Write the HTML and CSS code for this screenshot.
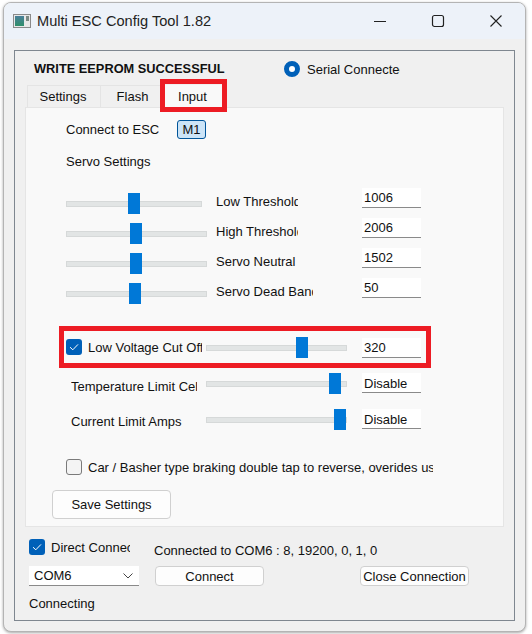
FILE: index.html
```html
<!DOCTYPE html>
<html lang="en">
<head>
  <meta charset="UTF-8" />
  <title>Multi ESC Config Tool 1.82</title>
  <link rel="stylesheet" href="styles.css">
</head>
<body>
  <div class="window">
    <header class="titlebar">
      <svg class="app-icon" width="18" height="14" viewBox="0 0 18 14">
        <defs>
          <linearGradient id="appfill" x1="0" y1="0" x2="0" y2="1">
            <stop offset="0" stop-color="#4a7f9a"/>
            <stop offset="1" stop-color="#2f8f6a"/>
          </linearGradient>
        </defs>
        <rect x="0.5" y="0.5" width="17" height="13" fill="#e8e8e8" stroke="#8a8a8a"/>
        <rect x="2" y="2" width="9" height="10" fill="url(#appfill)"/>
        <rect x="13" y="2" width="3" height="5" fill="#7c8a84"/>
      </svg>
      <span class="title">Multi ESC Config Tool 1.82</span>
      <div class="controls">
        <svg width="14" height="14" viewBox="0 0 14 14"><path d="M1 7.5h12" stroke="#222" fill="none"/></svg>
        <svg width="14" height="14" viewBox="0 0 14 14"><rect x="1.5" y="1.5" width="11" height="11" rx="2" stroke="#222" stroke-width="1.2" fill="none"/></svg>
        <svg width="14" height="14" viewBox="0 0 14 14"><path d="M1.5 1.5l11 11M12.5 1.5l-11 11" stroke="#222" stroke-width="1.1" fill="none"/></svg>
      </div>
    </header>

    <div class="content">
      <div class="group">
        <div class="status-row">
          <strong class="status">WRITE EEPROM SUCCESSFUL</strong>
          <span class="radio"></span>
          <span class="clip radio-label">Serial Connected</span>
        </div>

        <nav class="tabs">
          <a class="tab tab-settings">Settings</a>
          <a class="tab tab-flash">Flash</a>
          <a class="tab tab-input">Input<span class="marker"></span></a>
        </nav>

        <section class="pane">
          <div class="esc-row">
            <span class="esc-label">Connect to ESC</span>
            <button class="esc-btn">M1</button>
          </div>
          <div class="servo-title">Servo Settings</div>

          <div class="servo-row">
            <div class="slider short"><span class="thumb" style="left: 62px"></span></div>
            <span class="clip w81">Low Threshold</span>
            <input class="num" type="text" value="1006">
          </div>
          <div class="servo-row">
            <div class="slider"><span class="thumb" style="left: 64px"></span></div>
            <span class="clip w81">High Threshold</span>
            <input class="num" type="text" value="2006">
          </div>
          <div class="servo-row">
            <div class="slider"><span class="thumb" style="left: 64px"></span></div>
            <span class="clip w96">Servo Neutral</span>
            <input class="num" type="text" value="1502">
          </div>
          <div class="servo-row">
            <div class="slider"><span class="thumb" style="left: 63px"></span></div>
            <span class="clip w96">Servo Dead Band</span>
            <input class="num" type="text" value="50">
          </div>

          <div class="voltage-box">
            <span class="check on">
              <svg width="16" height="16" viewBox="0 0 16 16"><path d="M4 8.2l2.8 2.6L12 5.4" stroke="#fff" fill="none"/></svg>
            </span>
            <span class="clip voltage-label">Low Voltage Cut Off</span>
            <div class="slider"><span class="thumb" style="left: 90px"></span></div>
            <input class="num" type="text" value="320">
          </div>

          <div class="limit-row temp">
            <span class="clip limit-label">Temperature Limit Celsius</span>
            <div class="slider"><span class="thumb" style="left: 123px"></span></div>
            <input class="num" type="text" value="Disable">
          </div>
          <div class="limit-row amps">
            <span class="clip limit-label">Current Limit Amps</span>
            <div class="slider"><span class="thumb" style="left: 128px"></span></div>
            <input class="num" type="text" value="Disable">
          </div>

          <div class="brake-row">
            <span class="check"></span>
            <span class="clip brake-label">Car / Basher type braking double tap to reverse, overides user settings</span>
          </div>

          <button class="btn save-btn">Save Settings</button>
        </section>

        <div class="bottom">
          <div class="bottom-top">
            <span class="check on">
              <svg width="16" height="16" viewBox="0 0 16 16"><path d="M4 8.2l2.8 2.6L12 5.4" stroke="#fff" fill="none"/></svg>
            </span>
            <span class="clip direct-label">Direct Connect</span>
            <span class="conn-info">Connected to COM6 : 8, 19200, 0, 1, 0</span>
          </div>
          <div class="bottom-mid">
            <div class="combo">
              <span>COM6</span>
              <svg width="12" height="8" viewBox="0 0 12 8"><path d="M1.5 1.5L6 6l4.5-4.5" stroke="#444" fill="none"/></svg>
            </div>
            <button class="btn connect-btn">Connect</button>
            <button class="btn close-btn">Close Connection</button>
          </div>
          <div class="connecting">Connecting</div>
        </div>
      </div>
    </div>
  </div>
</body>
</html>
```

FILE: styles.css
```css
* {
  margin: 0;
  padding: 0;
  box-sizing: border-box;
  font-family: "Liberation Sans", Arial, sans-serif;
}

body {
  background: #fff;
  color: #111;
  font-size: 13px;
  width: 532px;
  height: 634px;
  padding: 2px 6px 2px 3px;
  overflow: hidden;
}

.window {
  height: 630px;
  background: #f0f0f0;
  border: 1px solid #b4b4b4;
  border-radius: 8px;
  box-shadow: 0 1px 3px rgba(0, 0, 0, 0.35);
  overflow: hidden;
}

/* Title bar */
.titlebar {
  height: 36px;
  background: #edf2f9;
  display: flex;
  align-items: center;
  padding-left: 9px;
}

.app-icon {
  margin-right: 6px;
}

.title {
  font-size: 14.6px;
  color: #222;
}

.controls {
  margin-left: auto;
  display: flex;
  gap: 44px;
  padding-right: 22px;
}

.content {
  padding: 11px 10px 10px 10px;
}

.group {
  height: 571px;
  border: 1px solid #7f8790;
}

.status-row {
  height: 34px;
  display: flex;
  align-items: center;
  padding-left: 19px;
}

.status {
  width: 250px;
  font-size: 12.8px;
}

.radio {
  width: 16px;
  height: 16px;
  margin-top: 2px;
  border-radius: 50%;
  border: 5px solid #0060b8;
  background: #fff;
  margin-right: 7px;
}

.clip {
  display: block;
  overflow: hidden;
  white-space: nowrap;
}

.radio-label {
  width: 93px;
  margin-top: 2px;
}

/* Tabs */
.tabs {
  height: 22px;
  display: flex;
  margin-left: 12px;
}

.tab {
  display: flex;
  align-items: center;
  justify-content: center;
  background: #f0f0f0;
  border: 1px solid #e4e4e4;
  border-bottom: none;
  position: relative;
}

.tab-settings {
  width: 74px;
  padding-right: 2px;
}

.tab-flash {
  width: 62px;
  border-left: none;
  padding-left: 2px;
}

.tab-input {
  width: 59px;
  background: #f9f9f9;
  border: none;
}

.marker {
  position: absolute;
  left: -3px;
  top: -6px;
  width: 67px;
  height: 33px;
  border: 5px solid #ed1c24;
}

/* Tab pane */
.pane {
  height: 420px;
  margin-left: 10px;
  margin-right: 10px;
  background: #f9f9f9;
  border: 1px solid #e5e5e5;
  padding-left: 40px;
}

.esc-row {
  height: 19px;
  margin-top: 12px;
  display: flex;
  align-items: center;
}

.esc-label {
  width: 111px;
}

.esc-btn {
  width: 29px;
  height: 19px;
  background: #cce4f7;
  border: 1px solid #005499;
  border-radius: 3px;
  font-size: 13px;
  color: #111;
}

.servo-title {
  margin-top: 15px;
  height: 15px;
}

.servo-row {
  height: 30px;
  display: grid;
  grid-template-columns: 141px 137px 59px;
  column-gap: 9px;
}

.servo-title + .servo-row {
  margin-top: 19px;
}

.servo-row .clip {
  margin-top: 6px;
}

.w81 {
  width: 82px;
}

.w96 {
  width: 97px;
}

/* Slider */
.slider {
  position: relative;
  width: 141px;
  height: 21px;
  margin-top: 5px;
}

.slider::before {
  content: "";
  position: absolute;
  left: 0;
  right: 0;
  top: 8px;
  height: 4px;
  background: #e2e5e5;
  border: 1px solid #d6d9d9;
}

.slider.short {
  width: 136px;
}

.thumb {
  position: absolute;
  top: 0;
  width: 12px;
  height: 21px;
  background: #0078d7;
}

.num {
  width: 59px;
  height: 20px;
  border: none;
  border-bottom: 1px solid #8a8a8a;
  background: #fff;
  padding: 0 0 1px 2px;
  font-size: 13px;
  color: #111;
  outline: none;
}

/* Low voltage row with its red frame */
.voltage-box {
  width: 372px;
  height: 42px;
  margin-top: 18px;
  margin-left: -7px;
  border: 5px solid #ed1c24;
  display: flex;
  align-items: center;
  padding-left: 2px;
}

.check {
  display: block;
  flex: none;
  width: 16px;
  height: 16px;
  background: #f4f4f4;
  border: 1px solid #7a7a7a;
  border-radius: 3px;
}

.check.on {
  background: #0060b8;
  border: none;
}

.check svg {
  display: block;
}

.voltage-label {
  width: 114px;
  margin-left: 6px;
}

.voltage-box .slider {
  margin: 0 0 0 4px;
}

.voltage-box .num {
  margin-left: 15px;
  margin-top: 2px;
}

.limit-row {
  display: flex;
  align-items: flex-start;
}

.limit-row.temp {
  margin-top: 5px;
}

.limit-row.amps {
  margin-top: 15px;
}

.limit-row .slider {
  margin: 0;
}

.limit-row .num {
  margin-left: 15px;
  padding-top: 1px;
  padding-bottom: 0;
}

.limit-label {
  width: 126px;
  margin-left: 5px;
  margin-right: 9px;
  margin-top: 6px;
}

.amps .limit-label {
  margin-top: 5px;
}

.brake-row {
  margin-top: 29px;
  display: flex;
  align-items: center;
}

.brake-label {
  width: 345px;
  margin-left: 6px;
}

.btn {
  background: #fdfdfd;
  border: 1px solid #d0d0d0;
  border-radius: 4px;
  font-size: 13px;
  color: #111;
}

.save-btn {
  display: block;
  width: 119px;
  height: 29px;
  margin-top: 15px;
  margin-left: -14px;
}

/* Bottom connection area */
.bottom {
  padding: 12px 0 0 14px;
}

.bottom-top {
  display: flex;
  align-items: center;
  height: 16px;
}

.direct-label {
  width: 79px;
  margin-left: 6px;
}

.conn-info {
  margin-left: 24px;
  margin-top: 6px;
}

.bottom-mid {
  display: flex;
  margin-top: 11px;
}

.combo {
  width: 110px;
  height: 20px;
  display: flex;
  align-items: center;
  justify-content: space-between;
  background: #fff;
  border-bottom: 1px solid #8a8a8a;
  padding: 0 5px 0 5px;
}

.connect-btn {
  width: 109px;
  height: 20px;
  margin-left: 16px;
}

.close-btn {
  width: 109px;
  height: 20px;
  margin-left: 96px;
}

.connecting {
  margin-top: 10px;
}
```
